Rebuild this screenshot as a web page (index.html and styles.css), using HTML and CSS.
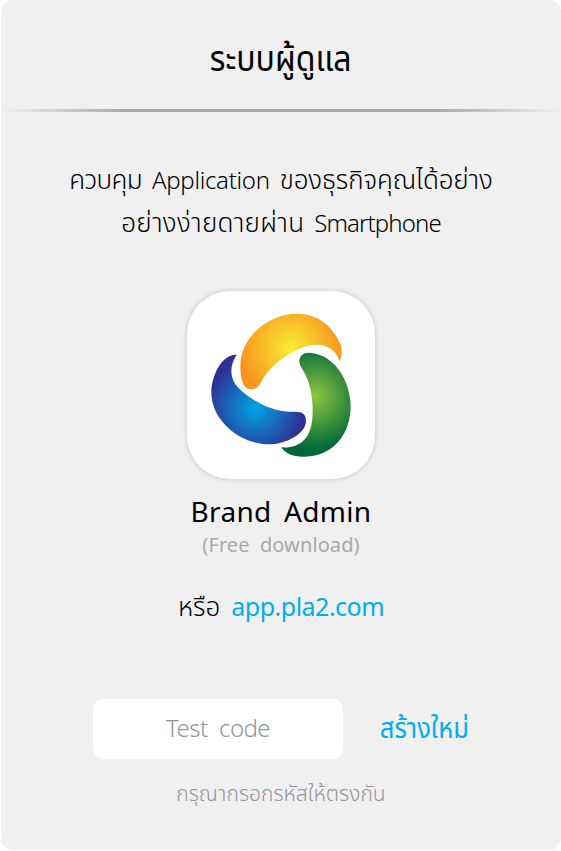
FILE: index.html
```html
<!DOCTYPE html>
<html lang="th">
<head>
<meta charset="utf-8">
<title>ระบบผู้ดูแล</title>
<link rel="stylesheet" href="styles.css">
</head>
<body>
<main class="panel">
  <header class="header"><h1 class="title">ระบบผู้ดูแล</h1></header>
  <div class="rule"></div>
  <div class="intro">
    <p class="line"><span class="thai t1">ควบคุม</span><span class="l1">Application</span><span class="thai t2">ของธุรกิจคุณได้อย่าง</span></p>
    <p class="line"><span class="thai t3">อย่างง่ายดายผ่าน</span><span class="l2">Smartphone</span></p>
  </div>
  <div class="app-icon">
    <svg viewBox="21 19 564 564" width="188" height="188" aria-hidden="true">
      <defs>
        <radialGradient id="orange" gradientUnits="userSpaceOnUse" cx="332" cy="190" r="152"><stop offset="0" stop-color="#f9ed32"/><stop offset="1" stop-color="#f7941e"/></radialGradient>
        <radialGradient id="green" gradientUnits="userSpaceOnUse" cx="405" cy="336" r="158"><stop offset="0" stop-color="#8dc63f"/><stop offset="1" stop-color="#006838"/></radialGradient>
        <radialGradient id="blue" gradientUnits="userSpaceOnUse" cx="226" cy="370" r="147"><stop offset="0" stop-color="#00a4e8"/><stop offset="1" stop-color="#2e3192"/></radialGradient>
      </defs>
      <path fill="url(#orange)" d="M181 250C178 158 266 86 352 87C424 88 463 136 481 178C487 194 486 215 479 230C468 193 438 180 406 180C358 180 274 235 247 285C239 300 232 314 213 314C190 314 182 286 181 250Z"/>
      <path fill="url(#green)" d="M390 204C466 210 512 292 512 364C512 447 461 515 374 516C344 517 316 509 304 488C358 491 397 464 398 384C399 342 391 291 369 257C362 246 358 239 358 230C358 213 371 203 390 204Z"/>
      <path fill="url(#blue)" d="M170 210C148 243 148 281 175 309C207 343 272 379 324 381C350 382 378 376 378 408C378 448 316 479 266 479C181 479 94 409 94 323C94 275 125 207 170 210Z"/>
    </svg>
  </div>
  <h2 class="app-name">Brand Admin</h2>
  <p class="app-note">(Free download)</p>
  <p class="alternative"><span class="t4">หรือ</span><a class="link">app.pla2.com</a></p>
  <div class="code-row">
    <div class="code-field"><span class="code-text">Test code</span></div>
    <a class="renew">สร้างใหม่</a>
  </div>
  <p class="hint">กรุณากรอกรหัสให้ตรงกัน</p>
</main>
</body>
</html>
```
FILE: styles.css
```css
* { box-sizing: border-box; }
body { margin: 0; background: #fff; font-family: "Noto Sans", "Noto Sans Thai", sans-serif; color: #000; }
h1, h2, p { margin: 0; font-weight: 400; white-space: nowrap; }
.panel { width: 560px; height: 850px; margin-left: 1px; background: #f0f0f0; border-radius: 12px; display: flex; flex-direction: column; align-items: center; }
.header { height: 109px; display: flex; align-items: center; padding-top: 7px; }
.title { font-size: 36px; line-height: 50px; font-weight: 400; transform: scaleX(.89); }
.rule { width: 100%; height: 3px; background: linear-gradient(90deg, transparent, #a7a9ac 22%, #a7a9ac 78%, transparent); }
.intro { padding-top: 46px; height: 179.4px; }
.line { display: flex; justify-content: center; gap: 10px; font-size: 24px; line-height: 43px; font-weight: 300; }
.thai { font-size: 26px; }
.t1 { letter-spacing: -.6px; }
.t2 { letter-spacing: -.1px; }
.t3 { letter-spacing: .3px; }
.l1 { letter-spacing: -.3px; }
.l2 { letter-spacing: -.9px; }
.app-icon { width: 188px; height: 188px; border-radius: 43px; background: #fff; box-shadow: 0 0 5px rgba(0,0,0,.2); }
.app-icon svg { display: block; }
.app-name { margin-top: 11.6px; font-size: 28px; line-height: 40px; letter-spacing: .3px; word-spacing: 5px; }
.app-note { margin-top: 1px; font-size: 20px; line-height: 26px; letter-spacing: .1px; word-spacing: 5px; color: #a7a9ac; }
.alternative { margin-top: 28px; display: flex; gap: 11px; font-size: 25px; line-height: 40px; }
.t4 { font-size: 26px; font-weight: 300; }
.link { letter-spacing: -.5px; }
.link, .renew { color: #00aeef; }
.code-row { margin-top: 73px; width: 376px; display: flex; align-items: center; justify-content: space-between; }
.code-field { width: 250px; height: 60px; border-radius: 10px; background: #fff; color: #939598; display: flex; align-items: center; justify-content: center; font-size: 24px; font-weight: 300; }
.code-text { letter-spacing: -.6px; word-spacing: 6px; padding-bottom: 3px; }
.renew { font-size: 28px; line-height: 40px; white-space: nowrap; transform: scaleX(.91); transform-origin: right; padding-bottom: 4px; }
.hint { margin-top: 18px; font-size: 21px; line-height: 32px; font-weight: 300; letter-spacing: .05px; color: #939598; }
```
